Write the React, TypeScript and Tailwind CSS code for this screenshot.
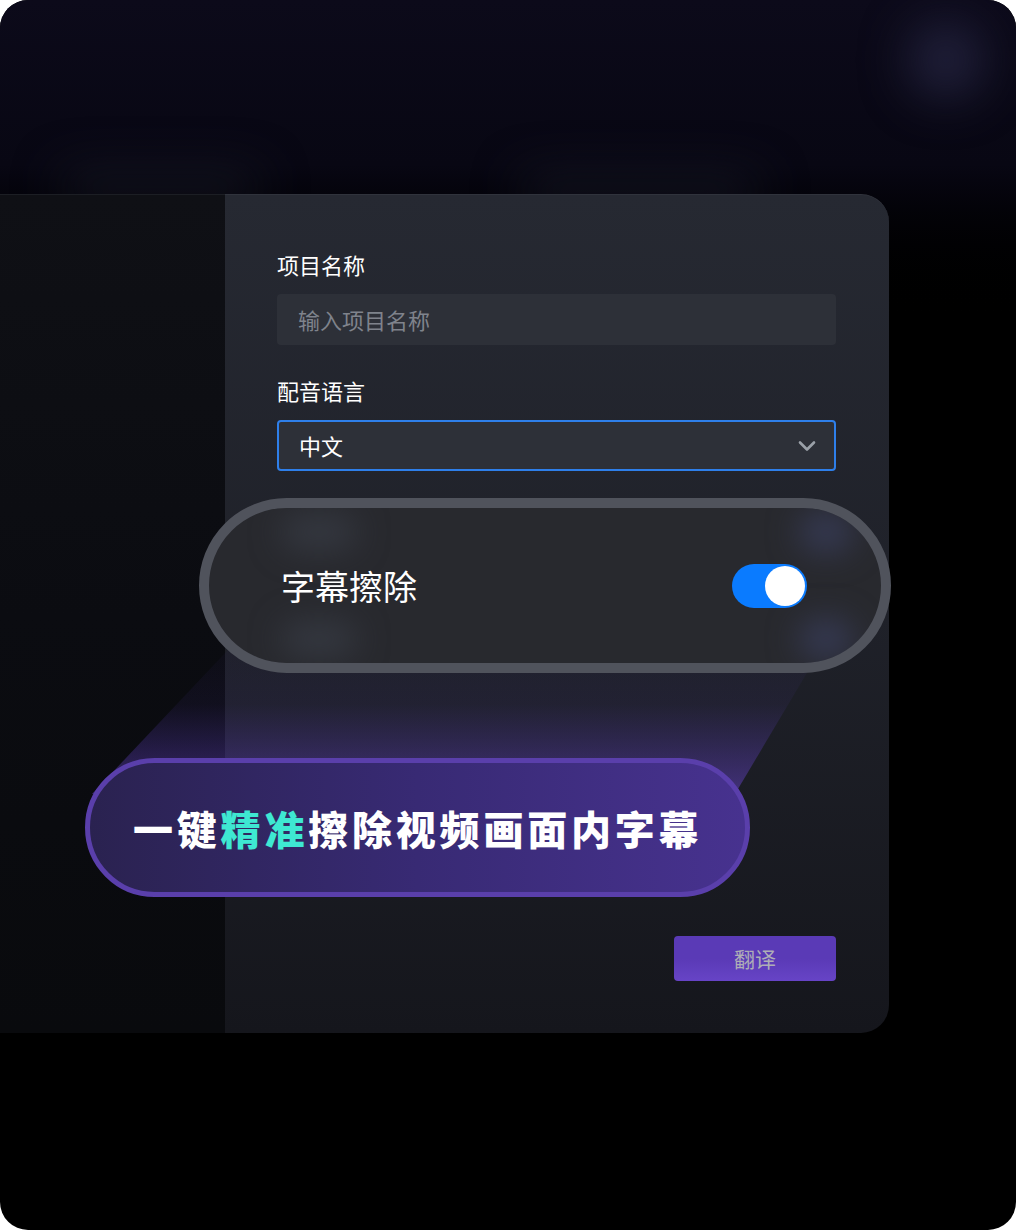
const font = "font-['Noto_Sans_CJK_SC','Noto_Sans',sans-serif]"

const Glow = ({ className }: { className: string }) => (
  <div className={`pointer-events-none absolute rounded-full ${className}`} />
)

const SubtitleToggle = () => (
  <div className="relative z-10 -ml-[78px] mt-[27px] h-[175px] w-[692px] overflow-hidden rounded-full border-[10px] border-[#50535c] bg-[#28292e]">
    {/* soft glows */}
    <Glow className="left-[72px] top-[6px] h-[36px] w-[76px] bg-[#3b3e48]/70 blur-lg" />
    <Glow className="left-[72px] bottom-[6px] h-[36px] w-[76px] bg-[#3b3e48]/70 blur-lg" />
    <Glow className="right-[28px] top-[4px] h-[40px] w-[54px] bg-[#3a3f5e]/80 blur-lg" />
    <Glow className="right-[28px] bottom-[4px] h-[40px] w-[54px] bg-[#3a3f5e]/80 blur-lg" />
    <div className="relative flex h-full items-center justify-between pl-[72px] pr-[74px]">
      <span className="text-[34px] leading-none text-white">字幕擦除</span>
      <div className="flex h-[44px] w-[75px] items-center justify-end rounded-full bg-[#0a7bff] pr-[2px]">
        <div className="h-[40px] w-[40px] rounded-full bg-white" />
      </div>
    </div>
  </div>
)

const Headline = () => (
  <div className="relative z-10 -ml-[192px] mt-[85px] flex h-[139px] w-[665px] items-center rounded-full border-[5px] border-[#5a3fab] bg-gradient-to-r from-[#2a2250] via-[#382a74] to-[#47328f] pl-[43px]">
    <span className="text-[40px] font-black leading-none tracking-[3.8px] text-white">
      一键<span className="text-[#3ee8d2]">精准</span>擦除视频画面内字幕
    </span>
  </div>
)

export default function App() {
  return (
    <div className={`h-[1230px] w-[1016px] bg-white ${font}`}>
      <div className="relative h-full w-full overflow-hidden rounded-[28px] bg-black">
        {/* Top backdrop */}
        <div className="absolute inset-x-0 top-0 h-[330px] bg-gradient-to-b from-[#0c0a1a] via-[#080713] to-black" />
        <Glow className="right-[32px] top-[22px] h-[76px] w-[76px] bg-[#2b2b4a]/70 blur-xl" />
        <Glow className="left-[60px] top-[172px] h-[30px] w-[200px] bg-[#181924]/80 blur-xl" />
        <Glow className="left-[520px] top-[176px] h-[30px] w-[240px] bg-[#181926]/80 blur-xl" />

        {/* Card */}
        <div className="relative mt-[194px] flex h-[839px] w-[889px] rounded-r-[28px]">
          <div className="w-[225px] shrink-0 border-t border-[#1c1e24] bg-gradient-to-b from-[#0f1015] via-[#0b0c11] to-[#090a0d]" />
          <div className="flex min-w-0 flex-1 flex-col rounded-r-[28px] border-t border-[#30333c] bg-gradient-to-b from-[#262932] via-[#1f2129] to-[#15161c] pl-[52px] pr-[53px] pt-[55px]">
            <label className="text-[22px] leading-[28px] text-white">项目名称</label>
            <div className="mt-[16px] flex h-[51px] items-center rounded-[4px] bg-[#2d3038] px-[21px]">
              <span className="text-[22px] text-[#7f838c]">输入项目名称</span>
            </div>

            <label className="mt-[31px] text-[22px] leading-[28px] text-white">配音语言</label>
            <div className="mt-[16px] flex h-[51px] items-center justify-between rounded-[4px] border-2 border-[#2e7fea] bg-[#2d3038] pl-[20px] pr-[18px]">
              <span className="text-[22px] text-white">中文</span>
              <svg width="18" height="12" viewBox="0 0 18 12" fill="none">
                <path d="M2 2.5l7 7 7-7" stroke="#9aa0a8" strokeWidth="2.6" strokeLinecap="round" strokeLinejoin="round" />
              </svg>
            </div>

            <SubtitleToggle />
            <Headline />

            <div className="relative z-10 mt-[39px] flex justify-end">
              <button className="flex h-[45px] w-[162px] items-center justify-center rounded-[4px] bg-gradient-to-b from-[#5a3ab6] via-[#5a3ab6] to-[#6744c6] text-[21px] text-[#aeaeb6]">
                翻译
              </button>
            </div>
          </div>

          {/* purple beam */}
          <svg className="pointer-events-none absolute left-0 top-0" width="889" height="839">
            <defs>
              <linearGradient id="beam" x1="0" y1="0" x2="0" y2="1">
                <stop offset="0" stopColor="#5b3fc0" stopOpacity="0" />
                <stop offset="0.5" stopColor="#5b3fc0" stopOpacity="0.08" />
                <stop offset="1" stopColor="#6a45d0" stopOpacity="0.5" />
              </linearGradient>
            </defs>
            <polygon points="262,420 842,420 735,600 92,600" fill="url(#beam)" />
          </svg>
        </div>
      </div>
    </div>
  )
}
